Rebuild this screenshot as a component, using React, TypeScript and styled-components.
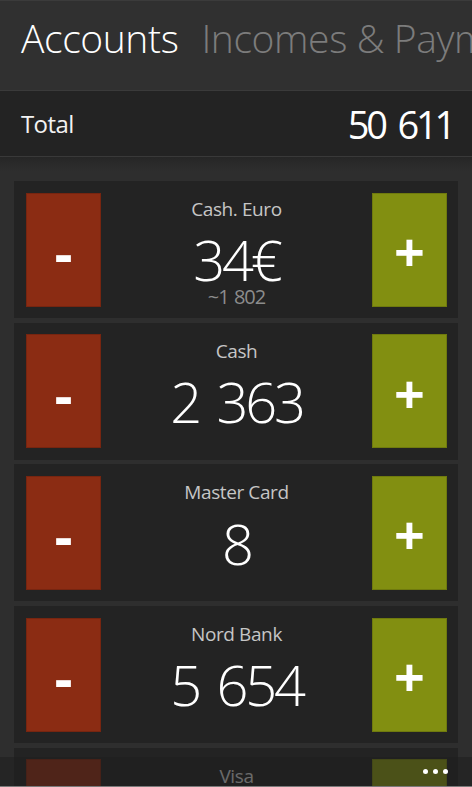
import styled, { createGlobalStyle } from 'styled-components';

//
//Base page look, dark phone theme
const GlobalStyle = createGlobalStyle`
    html, body {
        margin: 0;
        padding: 0;
        background: #2e2e2e;
        font-family: 'Open Sans', 'Noto Sans', sans-serif;
        color: #ffffff;
    }
`;

const Screen = styled.div`
    position: relative;
    height: 100vh;
    width: 100vw;
    overflow: hidden;
    display: flex;
    flex-direction: column;
    background: #2e2e2e;
`;

const Pivot = styled.div`
    box-sizing: border-box;
    height: 91px;
    flex-shrink: 0;
    padding: 13px 0 0 21px;
    display: flex;
    gap: 23px;
    white-space: nowrap;
    overflow: hidden;
    background: #303030;
    border-top: 1px solid #3b3b3b;
    border-bottom: 1px solid #3a3a3a;
`;

const PivotItem = styled.span<{ $active?: boolean }>`
    font-size: 39px;
    font-weight: 300;
    line-height: 48px;
    letter-spacing: -0.4px;
    color: ${(p) => (p.$active ? '#ffffff' : '#7c7c7c')};
`;

const TotalBar = styled.div`
    box-sizing: border-box;
    height: 66px;
    flex-shrink: 0;
    padding: 0 19px 0 21px;
    display: flex;
    align-items: center;
    justify-content: space-between;
    background: #232323;
    border-bottom: 1px solid #393939;
`;

const TotalLabel = styled.span`
    font-size: 24px;
    letter-spacing: -0.6px;
    color: #f2f2f2;
`;

const TotalValue = styled.span`
    font-size: 38px;
    letter-spacing: -3.2px;
    word-spacing: 6px;
    color: #ffffff;
`;

const List = styled.div`
    flex: 1;
    padding: 24px 14px 0;
    display: flex;
    flex-direction: column;
    gap: 4.7px;
    background: linear-gradient(to bottom, #262626 0px, #2e2e2e 14px);
`;

const Card = styled.div`
    box-sizing: border-box;
    height: 137px;
    flex-shrink: 0;
    padding: 11.5px 11px 11.5px 12px;
    display: flex;
    align-items: stretch;
    background: #232323;
`;

const ActionButton = styled.div<{ $kind: 'minus' | 'plus' }>`
    width: 75px;
    flex-shrink: 0;
    display: flex;
    align-items: center;
    justify-content: center;
    padding-top: ${(p) => (p.$kind === 'minus' ? '5px' : '3px')};
    box-sizing: border-box;
    background: ${(p) => (p.$kind === 'minus' ? '#8b2c13' : '#828f11')};
    box-shadow: inset 0 0 0 1px rgba(0, 0, 0, 0.14);
    font-size: ${(p) => (p.$kind === 'minus' ? '56px' : '54px')};
    font-weight: 700;
    line-height: 1;
    color: #ffffff;
`;

const Info = styled.div`
    flex: 1;
    display: flex;
    flex-direction: column;
    align-items: center;
    padding-top: 4.5px;
`;

const AccountName = styled.div`
    font-size: 19px;
    line-height: 24px;
    letter-spacing: -0.4px;
    color: #c6c6c6;
`;

const Amount = styled.div`
    margin-top: 8.3px;
    font-size: 56px;
    font-weight: 300;
    line-height: 60px;
    letter-spacing: -3.2px;
    word-spacing: 6px;
    color: #ffffff;
`;

const Converted = styled.div`
    margin-top: -3.8px;
    font-size: 20px;
    line-height: 22px;
    letter-spacing: -1px;
    word-spacing: 1px;
    color: #8c8c8c;
`;

const AppBar = styled.div`
    position: absolute;
    left: 0;
    right: 0;
    bottom: 0;
    height: 30px;
    box-sizing: border-box;
    padding-right: 24px;
    display: flex;
    align-items: center;
    justify-content: flex-end;
    gap: 5px;
    background: rgba(31, 31, 31, 0.55);
    border-bottom: 1px solid #7a7a7a;
`;

const Dot = styled.span`
    width: 5px;
    height: 5px;
    border-radius: 50%;
    background: #ffffff;
`;

type Account = {
    name: string;
    amount: string;
    converted?: string;
};

const accounts: Account[] = [
    { name: 'Cash. Euro', amount: '34€', converted: '~1 802' },
    { name: 'Cash', amount: '2 363' },
    { name: 'Master Card', amount: '8' },
    { name: 'Nord Bank', amount: '5 654' },
    { name: 'Visa', amount: '1 290' },
];

const App = () => {
    return (
        <Screen>
            <GlobalStyle />
            <Pivot>
                <PivotItem $active>Accounts</PivotItem>
                <PivotItem>Incomes &amp; Payments</PivotItem>
            </Pivot>
            <TotalBar>
                <TotalLabel>Total</TotalLabel>
                <TotalValue>50 611</TotalValue>
            </TotalBar>
            <List>
                {accounts.map((a) => (
                    <Card key={a.name}>
                        <ActionButton $kind="minus">-</ActionButton>
                        <Info>
                            <AccountName>{a.name}</AccountName>
                            <Amount>{a.amount}</Amount>
                            {a.converted && <Converted>{a.converted}</Converted>}
                        </Info>
                        <ActionButton $kind="plus">+</ActionButton>
                    </Card>
                ))}
            </List>
            <AppBar>
                <Dot />
                <Dot />
                <Dot />
            </AppBar>
        </Screen>
    );
};

export default App;
